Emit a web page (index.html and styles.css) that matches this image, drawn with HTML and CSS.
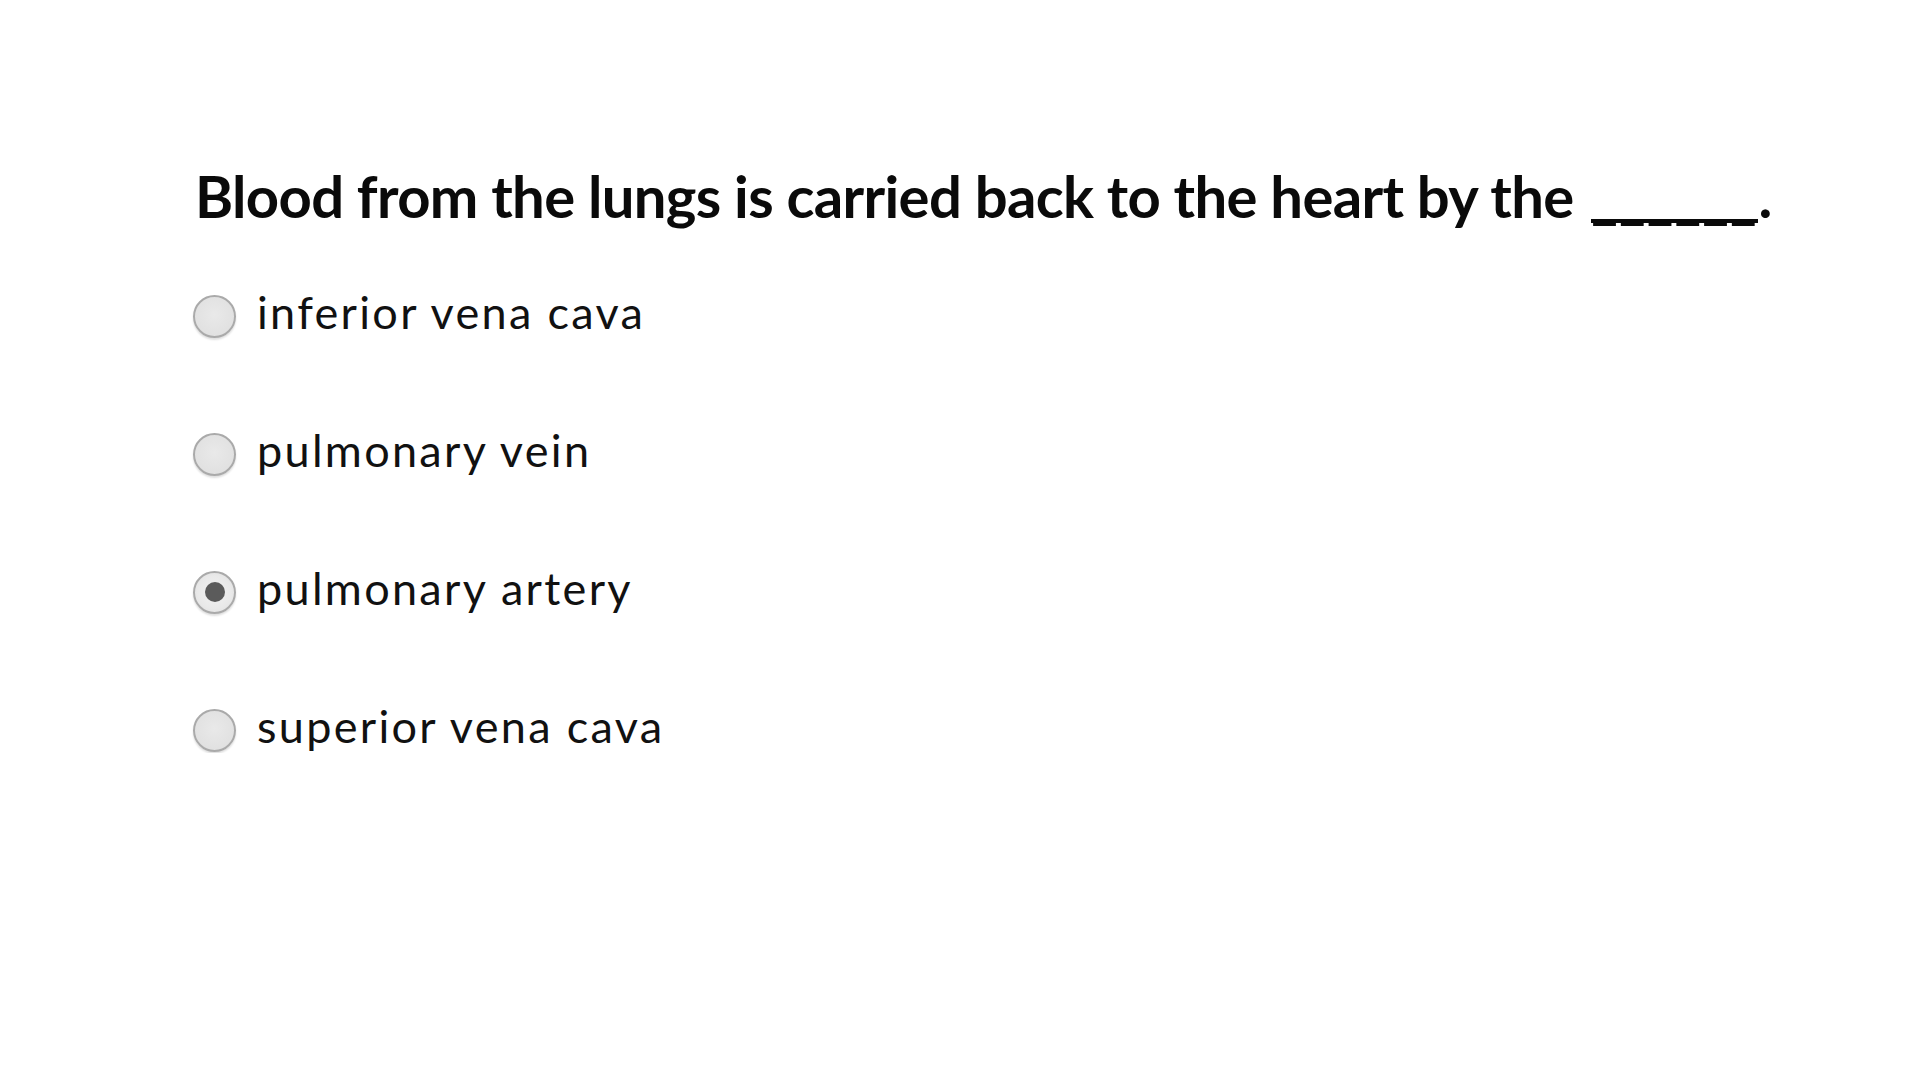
FILE: index.html
```html
<!DOCTYPE html>
<html>
<head>
<meta charset="utf-8">
<link rel="stylesheet" href="styles.css">
</head>
<body>
<main class="quiz">
  <h1 class="question">Blood from the lungs is carried back to the heart by the <span class="blank">______</span>.</h1>
  <ul class="options">
    <li class="option"><span class="radio"></span><span class="label">inferior vena cava</span></li>
    <li class="option"><span class="radio"></span><span class="label">pulmonary vein</span></li>
    <li class="option"><span class="radio checked"></span><span class="label">pulmonary artery</span></li>
    <li class="option"><span class="radio"></span><span class="label">superior vena cava</span></li>
  </ul>
</main>
</body>
</html>
```
FILE: styles.css
```css
html, body {
  margin: 0;
  padding: 0;
  background: #ffffff;
}
body {
  font-family: "Lato", "Liberation Sans", sans-serif;
  color: #111;
}
.quiz {
  padding: 163px 0 0 195px;
}
.question {
  margin: 0;
  font-size: 58px;
  font-weight: 700;
  line-height: 66px;
  letter-spacing: -0.65px;
  color: #0a0a0a;
}
.blank {
  position: relative;
  letter-spacing: 0.7px;
  margin-left: 4px;
  margin-right: 1px;
}
.blank::after {
  content: "";
  position: absolute;
  left: 0;
  right: 0;
  bottom: 7px;
  height: 4px;
  background: #0a0a0a;
}
.options {
  list-style: none;
  margin: 56px 0 0 -2px;
  padding: 0;
  display: flex;
  flex-direction: column;
  gap: 84px;
}
.option {
  display: flex;
  align-items: center;
  height: 54px;
  gap: 21px;
}
.radio {
  flex: none;
  box-sizing: border-box;
  width: 43px;
  height: 43px;
  border-radius: 50%;
  border: 2px solid #aaaaaa;
  background: radial-gradient(circle at 50% 45%, #e9e9e9 0%, #e1e1e1 70%, #d9d9d9 100%);
  box-shadow: 0 2px 2px rgba(0,0,0,0.13);
  position: relative;
  top: 4px;
  display: flex;
  align-items: center;
  justify-content: center;
}
.radio.checked {
  background: radial-gradient(circle, #f2f2f2 0%, #e9e9e9 60%, #dcdcdc 100%);
}
.radio.checked::after {
  content: "";
  width: 20px;
  height: 20px;
  border-radius: 50%;
  background: #5b5b5b;
}
.label {
  font-size: 45px;
  font-weight: 400;
  letter-spacing: 2.3px;
  color: #111;
}
```
